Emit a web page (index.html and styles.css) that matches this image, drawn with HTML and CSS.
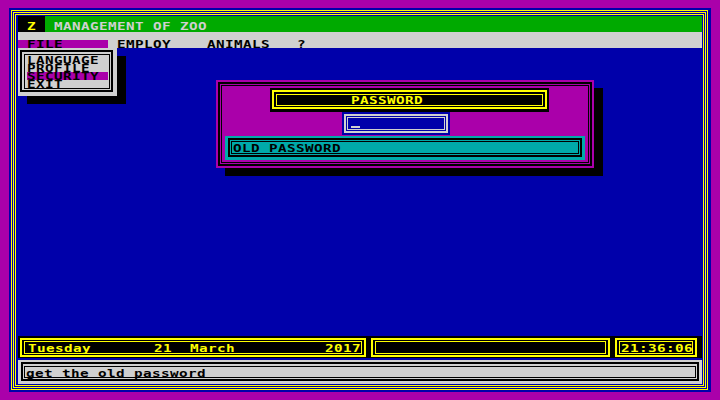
FILE: index.html
```html
<!DOCTYPE html>
<html>
<head>
<meta charset="utf-8">
<title>Management of Zoo</title>
<link rel="stylesheet" href="styles.css">
</head>
<body>
<div class="screen">
  <div class="frame"><div class="frame"><div class="frame inner">
    <div class="app">
      <div class="titlebar">
        <div class="logo"><span class="t">Z</span></div>
        <div class="title"><span class="t">MANAGEMENT OF ZOO</span></div>
      </div>
      <div class="menubar">
        <div class="mi active"><span class="t">FILE</span></div><div class="mi"><span class="t">EMPLOY</span></div><div class="mi"><span class="t">ANIMALS</span></div><div class="mi"><span class="t">?</span></div>
      </div>
      <div class="main">
        <div class="dropdown">
          <div class="dd-out">
            <div class="dd-in">
              <div class="dd-item"><span class="t">LANGUAGE</span></div>
              <div class="dd-item"><span class="t">PROFILE</span></div>
              <div class="dd-item sel"><span class="t">SECURITY</span></div>
              <div class="dd-item"><span class="t">EXIT</span></div>
            </div>
          </div>
        </div>
        <div class="dialog">
          <div class="dlg-out">
            <div class="dlg-in">
              <div class="dtitle"><div class="dt-out"><div class="dt-in"><span class="t">PASSWORD</span></div></div></div>
              <div class="dinput"><div class="di-out"><div class="di-in"><div class="cursor"></div></div></div></div>
              <div class="dfield"><div class="df-out"><div class="df-in"><span class="t">OLD PASSWORD</span></div></div></div>
            </div>
          </div>
        </div>
      </div>
      <div class="status">
        <div class="sbox date"><div class="sin"><span class="t">Tuesday       21  March          2017</span></div></div>
        <div class="sbox blank"><div class="sin"></div></div>
        <div class="sbox time"><div class="sin"><span class="t">21:36:06</span></div></div>
      </div>
      <div class="message"><div class="msg-out"><div class="msg-in"><span class="t">get the old password</span></div></div></div>
    </div>
  </div></div></div>
</div>
</body>
</html>
```
FILE: styles.css
```css
html, body {
  margin: 0;
  padding: 0;
}
body {
  width: 720px;
  height: 400px;
  overflow: hidden;
  background: #aa00aa;
  font: bold 11px/12px "DejaVu Sans Mono", monospace;
}
.t {
  display: inline-block;
  white-space: pre;
  letter-spacing: 0.3px;
  transform: scaleX(1.3);
  transform-origin: 0 0;
}
.screen {
  margin: 8px 0 0 9px;
  width: 697px;
  height: 380px;
  padding: 2px 3px 2px 2px;
  background: #0000aa;
}
.frame {
  border: 1px solid #ffff00;
  padding: 1px;
}
.frame.inner {
  padding: 1px 1px 1px 2px;
}
.app {
  width: 684px;
  height: 368px;
  display: flex;
  flex-direction: column;
}
.titlebar {
  height: 16px;
  display: flex;
}
.logo {
  width: 27px;
  height: 16px;
  box-sizing: border-box;
  padding: 5px 0 0 9px;
  background: #000;
  color: #ffff00;
}
.title {
  flex: 1;
  height: 16px;
  box-sizing: border-box;
  background: #00aa00;
  color: #d0d0d0;
  padding: 5px 0 0 9px;
}
.menubar {
  height: 16px;
  box-sizing: border-box;
  padding-top: 8px;
  background: #d0d0d0;
  color: #000;
  display: flex;
  line-height: 10px;
}
.mi {
  width: 90px;
  height: 8px;
  box-sizing: border-box;
  padding-left: 9px;
}
.mi.active {
  background: #aa00aa;
}
.main {
  position: relative;
  height: 288px;
}
.dropdown {
  position: absolute;
  left: 0;
  top: 0;
  width: 93px;
  padding: 2px 4px 4px 2px;
  background: #d0d0d0;
  box-shadow: 9px 8px 0 #000;
  color: #000;
  line-height: 10px;
}
.dd-out {
  border: 2px solid #000;
  padding: 2px 1px 1px 2px;
}
.dd-in {
  border: 1px solid #000;
  padding: 1px 1px 0 2px;
}
.dd-item {
  width: 81px;
  height: 8px;
}
.dd-item.sel {
  background: #aa00aa;
}
.dialog {
  position: absolute;
  left: 198px;
  top: 32px;
  width: 378px;
  height: 88px;
  box-sizing: border-box;
  padding: 2px;
  background: #aa00aa;
  box-shadow: 9px 8px 0 #000;
}
.dlg-out {
  height: 100%;
  box-sizing: border-box;
  border: 2px solid #000;
  padding: 1px;
}
.dlg-in {
  height: 100%;
  box-sizing: border-box;
  border: 1px solid #000;
  display: flex;
  flex-direction: column;
  align-items: flex-start;
}
.dtitle {
  margin: 2px 0 0 48px;
  width: 279px;
  height: 24px;
  box-sizing: border-box;
  padding: 2px 2px 3px;
  background: #000;
}
.dt-out {
  border: 2px solid #ffff00;
  padding: 2px 2px 1px;
}
.dt-in {
  border: 1px solid #ffff00;
  height: 10px;
  padding-left: 74px;
  color: #ffff00;
}
.dinput {
  margin-left: 120px;
  width: 108px;
  height: 23px;
  box-sizing: border-box;
  padding: 2px;
  background: #0000aa;
}
.di-out {
  border: 2px solid #d0d0d0;
  padding: 1px;
}
.di-in {
  border: 1px solid #d0d0d0;
  height: 11px;
  overflow: hidden;
}
.cursor {
  margin: 8px 0 0 3px;
  width: 9px;
  height: 2px;
  background: #d0d0d0;
}
.dfield {
  margin: 1px 0 0 3px;
  width: 360px;
  height: 24px;
  box-sizing: border-box;
  padding: 2px 3px 3px;
  background: #00aaaa;
}
.df-out {
  border: 2px solid #000;
  padding: 1px;
}
.df-in {
  border: 1px solid #000;
  height: 10px;
  padding: 1px 0 0 1px;
  color: #000;
}
.status {
  height: 22px;
  box-sizing: border-box;
  padding: 2px 5px 1px 2px;
  background: #000;
  display: flex;
  gap: 5px;
}
.sbox {
  box-sizing: border-box;
  border: 2px solid #ffff00;
  padding: 1px 2px;
  color: #ffff00;
}
.sbox.date { width: 346px; }
.sbox.blank { width: 239px; }
.sbox.time { width: 82px; }
.sin {
  border: 1px solid #ffff00;
  height: 10px;
  padding-top: 1px;
}
.date .sin { padding-left: 3px; }
.time .sin { padding-left: 1px; }
.message {
  margin-top: 2px;
  height: 24px;
  box-sizing: border-box;
  padding: 2px 3px 3px;
  background: #d0d0d0;
  color: #000;
}
.msg-out {
  border: 2px solid #000;
  padding: 2px 1px 1px 1px;
}
.msg-in {
  border: 1px solid #000;
  height: 9px;
  padding: 1px 0 0 1px;
}
```
